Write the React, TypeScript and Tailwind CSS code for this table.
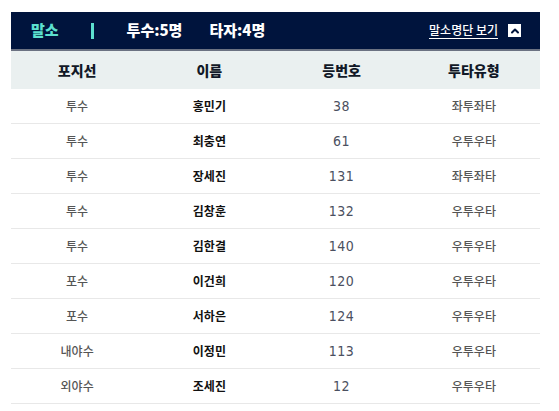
import { ChevronUp } from "lucide-react";

const rows = [
  { pos: "투수", name: "홍민기", no: "38", type: "좌투좌타" },
  { pos: "투수", name: "최충연", no: "61", type: "우투우타" },
  { pos: "투수", name: "장세진", no: "131", type: "좌투좌타" },
  { pos: "투수", name: "김창훈", no: "132", type: "우투우타" },
  { pos: "투수", name: "김한결", no: "140", type: "우투우타" },
  { pos: "포수", name: "이건희", no: "120", type: "우투우타" },
  { pos: "포수", name: "서하은", no: "124", type: "우투우타" },
  { pos: "내야수", name: "이정민", no: "113", type: "우투우타" },
  { pos: "외야수", name: "조세진", no: "12", type: "우투우타" },
];

export default function App() {
  return (
    <div className="min-h-[411px] bg-white pl-[11px] pt-[12px] pr-[19px] font-['Noto_Sans_CJK_KR',sans-serif]">
      <div className="flex h-[39px] items-center border-b-2 border-[#6b7282] bg-[#00143d] text-[15px] font-black text-white">
        <span className="ml-[20px] text-[#5de0cf]">말소</span>
        <span className="ml-[32px] h-[16px] w-[3px] bg-[#5de0cf]" />
        <span className="ml-[33px]">투수:5명</span>
        <span className="ml-[27px]">타자:4명</span>
        <span className="ml-auto border-b border-white pb-[1px] text-[12px] font-medium leading-[14px]">말소명단 보기</span>
        <span className="ml-[10px] mr-[19px] flex h-[13px] w-[13px] items-center justify-center bg-white">
          <ChevronUp size={12} strokeWidth={4} className="text-[#00143d]" />
        </span>
      </div>
      <div className="grid h-[38px] grid-cols-4 items-center bg-[#eaf0f0] text-center text-[14px] font-black text-[#111827]">
        <span>포지선</span>
        <span>이름</span>
        <span>등번호</span>
        <span>투타유형</span>
      </div>
      {rows.map((r) => (
        <div key={r.name} className="grid h-[35px] grid-cols-4 items-center border-b border-[#e8e8e8] text-center text-[12px] font-medium text-[#555]">
          <span>{r.pos}</span>
          <span className="font-bold text-[#111]">{r.name}</span>
          <span className="font-['DejaVu_Sans_Condensed','Liberation_Sans',sans-serif] text-[14px] tracking-[0.5px] text-[#4b5060]">{r.no}</span>
          <span>{r.type}</span>
        </div>
      ))}
    </div>
  );
}
